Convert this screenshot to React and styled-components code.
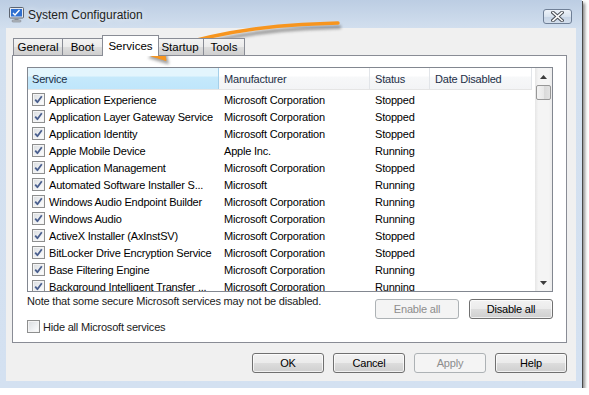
import React from "react";
import styled, { createGlobalStyle } from "styled-components";

// page reset
const GlobalStyle = createGlobalStyle`
  body {
    margin: 0;
    background: #ffffff;
    font-family: "Liberation Sans", Arial, sans-serif;
  }
`;

const FONT = `"Liberation Sans", Arial, sans-serif`;

const services = [
  ["Application Experience", "Microsoft Corporation", "Stopped"],
  ["Application Layer Gateway Service", "Microsoft Corporation", "Stopped"],
  ["Application Identity", "Microsoft Corporation", "Stopped"],
  ["Apple Mobile Device", "Apple Inc.", "Running"],
  ["Application Management", "Microsoft Corporation", "Stopped"],
  ["Automated Software Installer S...", "Microsoft", "Running"],
  ["Windows Audio Endpoint Builder", "Microsoft Corporation", "Running"],
  ["Windows Audio", "Microsoft Corporation", "Running"],
  ["ActiveX Installer (AxInstSV)", "Microsoft Corporation", "Stopped"],
  ["BitLocker Drive Encryption Service", "Microsoft Corporation", "Stopped"],
  ["Base Filtering Engine", "Microsoft Corporation", "Running"],
  ["Background Intelligent Transfer ...", "Microsoft Corporation", "Running"],
];

// tab label + width in px
const tabs = [
  ["General", 50],
  ["Boot", 41],
  ["Services", 57],
  ["Startup", 48],
  ["Tools", 42],
];

// small parts
const Check = ({ checked }) => (
  <CheckBox>
    {checked && (
      <svg width="9" height="9" viewBox="0 0 9 9">
        <path
          d="M1.2 4.6 L3.4 7.2 L7.8 1.2"
          fill="none"
          stroke="#4a5f8e"
          strokeWidth="1.8"
          strokeLinejoin="round"
        />
      </svg>
    )}
  </CheckBox>
);

const AppIcon = () => (
  <svg width="17" height="17" viewBox="0 0 17 17">
    <rect x="1.5" y="1.5" width="14" height="10.5" rx="1" fill="#e6eaf0" stroke="#5d6470" />
    <rect x="3" y="3" width="11" height="7.5" fill="#2f6fd0" />
    <path d="M5 7 L7 9 L11.5 4" fill="none" stroke="#ffffff" strokeWidth="1.4" />
    <rect x="6.5" y="12.5" width="4" height="1.5" fill="#8a9099" />
    <rect x="4" y="14" width="9" height="2" rx="1" fill="#b7bcc4" stroke="#7d838c" strokeWidth="0.6" />
  </svg>
);

const SHAFT = "M338 23 L302 24.5 C252 27, 205 36, 162 49.5";
const HEAD = "M145 54 L162 41 L166 60.5 Z";

const Arrow = () => (
  <Overlay width="589" height="395" viewBox="0 0 589 395">
    <defs>
      <filter id="soft" x="-10%" y="-50%" width="120%" height="200%">
        <feGaussianBlur stdDeviation="1.6" />
      </filter>
    </defs>
    <g transform="translate(3 4)" opacity="0.55" filter="url(#soft)">
      <path d={SHAFT} fill="none" stroke="#555" strokeWidth="3.5" />
      <path d={HEAD} fill="#555" />
    </g>
    <path d={SHAFT} fill="none" stroke="#f7951e" strokeWidth="3.4" strokeLinecap="round" />
    <path d={HEAD} fill="#f7951e" stroke="#f7951e" strokeWidth="1" strokeLinejoin="round" />
  </Overlay>
);

export default function App() {
  return (
    <>
      <GlobalStyle />
      <Window>
        <TitleBar>
          <TitleLeft>
            <AppIcon />
            <Title>System Configuration</Title>
          </TitleLeft>
          <CloseButton>
            <svg width="13" height="11" viewBox="0 0 13 11">
              <path
                d="M2 1.5 L11 9.5 M11 1.5 L2 9.5"
                stroke="#4a4f57"
                strokeWidth="3.6"
                strokeLinecap="square"
              />
              <path
                d="M2 1.5 L11 9.5 M11 1.5 L2 9.5"
                stroke="#ffffff"
                strokeWidth="1.6"
                strokeLinecap="square"
              />
            </svg>
          </CloseButton>
        </TitleBar>

        <Client>
          <TabStrip>
            {tabs.map(([t, w]) => (
              <Tab key={t} $w={w} $active={t === "Services"}>
                {t}
              </Tab>
            ))}
          </TabStrip>

          <Panel>
            <ListBox>
              <ListMain>
                <HeaderRow>
                  <HeaderCell $sorted>Service</HeaderCell>
                  <HeaderCell>Manufacturer</HeaderCell>
                  <HeaderCell>Status</HeaderCell>
                  <HeaderCell>Date Disabled</HeaderCell>
                </HeaderRow>
                <Body>
                  {services.map(([name, maker, status]) => (
                    <Row key={name}>
                      <ServiceCell>
                        <Check checked />
                        <span>{name}</span>
                      </ServiceCell>
                      <Cell>{maker}</Cell>
                      <Cell>{status}</Cell>
                      <Cell />
                    </Row>
                  ))}
                </Body>
              </ListMain>
              <ScrollBar>
                <ScrollArrow>
                  <svg width="7" height="4" viewBox="0 0 7 4">
                    <path d="M0 4 L3.5 0 L7 4 Z" fill="#3c3c3c" />
                  </svg>
                </ScrollArrow>
                <Thumb />
                <Track />
                <ScrollArrow>
                  <svg width="7" height="4" viewBox="0 0 7 4">
                    <path d="M0 0 L7 0 L3.5 4 Z" fill="#3c3c3c" />
                  </svg>
                </ScrollArrow>
              </ScrollBar>
            </ListBox>

            <Below>
              <LeftCol>
                <Note>Note that some secure Microsoft services may not be disabled.</Note>
                <HideRow>
                  <Check />
                  <span>Hide all Microsoft services</span>
                </HideRow>
              </LeftCol>
              <ButtonPair>
                <Button $wide disabled>
                  Enable all
                </Button>
                <Button $wide>Disable all</Button>
              </ButtonPair>
            </Below>
          </Panel>

          <Footer>
            <Button>OK</Button>
            <Button>Cancel</Button>
            <Button disabled>Apply</Button>
            <Button>Help</Button>
          </Footer>
        </Client>

        <Arrow />
      </Window>
    </>
  );
}

// window chrome
const Window = styled.div`
  position: relative;
  width: 582px;
  height: 388px;
  display: flex;
  flex-direction: column;
  background: linear-gradient(to bottom, #bccde3 0px, #d3e0ef 30px, #d4e1f1 100%);
  box-shadow: 1px 1px 0 #4a4a4a, 3px 3px 3px rgba(0, 0, 0, 0.45);
  font-family: ${FONT};
`;

const TitleBar = styled.div`
  height: 28px;
  display: flex;
  justify-content: space-between;
  align-items: flex-start;
  padding: 0 10px 0 8px;
`;

const TitleLeft = styled.div`
  display: flex;
  align-items: center;
  gap: 3px;
  padding-top: 6px;
`;

const Title = styled.span`
  font-size: 12px;
  color: #222;
  text-shadow: 0 0 6px rgba(255, 255, 255, 0.9);
`;

const CloseButton = styled.div`
  margin-top: 9px;
  width: 29px;
  height: 15px;
  box-sizing: border-box;
  border: 1px solid #6f7f96;
  border-radius: 3px;
  background: linear-gradient(to bottom, #eef3f9 0%, #d9e3ef 50%, #c6d4e6 51%, #d3deec 100%);
  display: flex;
  align-items: center;
  justify-content: center;
`;

const Client = styled.div`
  flex: 1;
  margin: 0 6px 7px 6px;
  background: #f0f0f0;
  display: flex;
  flex-direction: column;
  padding: 8px 9px 0 6px;
  box-sizing: border-box;
  font-size: 11px;
  letter-spacing: -0.2px;
`;

// tabs
const TabStrip = styled.div`
  display: flex;
  align-items: flex-end;
  height: 20px;
  padding-left: 2px;
  position: relative;
  z-index: 1;
  margin-bottom: -1px;
`;

const Tab = styled.div`
  width: ${(p) => p.$w}px;
  height: ${(p) => (p.$active ? "21px" : "18px")};
  margin-left: -1px;
  margin-right: ${(p) => (p.$active ? "-2px" : "0")};
  box-sizing: border-box;
  border: 1px solid #898c95;
  border-bottom: ${(p) => (p.$active ? "none" : "1px solid #898c95")};
  background: ${(p) =>
    p.$active ? "#ffffff" : "linear-gradient(to bottom, #f3f3f3 0%, #ebebeb 50%, #dddddd 51%, #cfcfcf 100%)"};
  font-size: 11.5px;
  letter-spacing: 0;
  color: #000;
  display: flex;
  align-items: center;
  justify-content: center;
  position: relative;
  z-index: ${(p) => (p.$active ? 2 : 1)};
`;

const Panel = styled.div`
  height: 288px;
  box-sizing: border-box;
  background: #ffffff;
  border: 1px solid #898c95;
  padding: 11px 13px 0 14px;
  display: flex;
  flex-direction: column;
`;

// list view
const ListBox = styled.div`
  height: 225px;
  box-sizing: border-box;
  border: 1px solid #828790;
  display: flex;
  overflow: hidden;
`;

const ListMain = styled.div`
  flex: 1;
  display: flex;
  flex-direction: column;
  overflow: hidden;
`;

const HeaderRow = styled.div`
  height: 22px;
  display: grid;
  grid-template-columns: 191px 151px 60px 102px;
  border-bottom: 1px solid #e5e5e5;
  background: linear-gradient(to bottom, #ffffff 0%, #ffffff 40%, #f7f8f9 41%, #f3f4f6 100%);
  box-sizing: border-box;
`;

const HeaderCell = styled.div`
  display: flex;
  align-items: center;
  padding-left: ${(p) => (p.$sorted ? "4px" : "5px")};
  color: #1d2f47;
  border-right: 1px solid ${(p) => (p.$sorted ? "#a4cfe9" : "#e2e5e9")};
  background: ${(p) =>
    p.$sorted
      ? "linear-gradient(to bottom, #e3f5fd 0%, #e3f5fd 40%, #c6e9fb 41%, #bfe6fb 100%)"
      : "transparent"};
  white-space: nowrap;
`;

const Body = styled.div`
  flex: 1;
  overflow: hidden;
  padding-top: 1px;
`;

const Row = styled.div`
  height: 17px;
  display: grid;
  grid-template-columns: 191px 151px 60px 102px;
  color: #000;
`;

const Cell = styled.div`
  display: flex;
  align-items: center;
  padding-left: 5px;
  white-space: nowrap;
  overflow: hidden;
`;

const ServiceCell = styled(Cell)`
  padding-left: 4px;
  gap: 4px;
`;

const CheckBox = styled.span`
  width: 13px;
  height: 13px;
  box-sizing: border-box;
  border: 1px solid #8e8f8f;
  background: linear-gradient(135deg, #d9dcdf 0%, #eef0f2 55%, #ffffff 100%);
  box-shadow: inset 0 0 0 1px #f4f4f4;
  display: inline-flex;
  align-items: center;
  justify-content: center;
  flex-shrink: 0;
`;

// scroll bar
const ScrollBar = styled.div`
  width: 17px;
  margin-left: 3px;
  display: flex;
  flex-direction: column;
  background: linear-gradient(to right, #e6e6e6 0%, #f4f4f4 20%, #f4f4f4 80%, #ececec 100%);
`;

const ScrollArrow = styled.div`
  height: 17px;
  display: flex;
  align-items: center;
  justify-content: center;
`;

const Thumb = styled.div`
  height: 15px;
  margin: 0 1px;
  box-sizing: border-box;
  border: 1px solid #979797;
  border-radius: 2px;
  background: linear-gradient(to right, #f3f3f3 0%, #e8e8e8 50%, #d8d8d8 51%, #e2e2e2 100%);
`;

const Track = styled.div`
  flex: 1;
`;

// under the list
const Below = styled.div`
  display: flex;
  justify-content: space-between;
  align-items: flex-start;
`;

const LeftCol = styled.div`
  display: flex;
  flex-direction: column;
  padding-top: 2px;
`;

const Note = styled.div`
  line-height: 15px;
  color: #1a1a1a;
`;

const HideRow = styled.label`
  margin-top: 11px;
  display: flex;
  align-items: center;
  gap: 3px;
  color: #1a1a1a;
`;

const ButtonPair = styled.div`
  display: flex;
  gap: 10px;
  padding-top: 7px;
`;

const Button = styled.button`
  width: ${(p) => (p.$wide ? "84px" : "72px")};
  height: 20px;
  box-sizing: border-box;
  padding: 0;
  border-radius: 3px;
  font-family: ${FONT};
  font-size: 11px;
  letter-spacing: -0.2px;
  color: #000;
  border: 1px solid #707070;
  background: linear-gradient(to bottom, #f2f2f2 0%, #ebebeb 50%, #dddddd 51%, #cfcfcf 100%);
  box-shadow: inset 0 0 0 1px rgba(255, 255, 255, 0.7);

  &:disabled {
    color: #8d8d8d;
    border-color: #adb2b5;
    background: #f4f4f4;
    box-shadow: none;
  }
`;

const Footer = styled.div`
  display: flex;
  justify-content: flex-end;
  gap: 9px;
  margin-top: 10px;
`;

const Overlay = styled.svg`
  position: absolute;
  left: 0;
  top: 0;
  pointer-events: none;
  overflow: visible;
`;
